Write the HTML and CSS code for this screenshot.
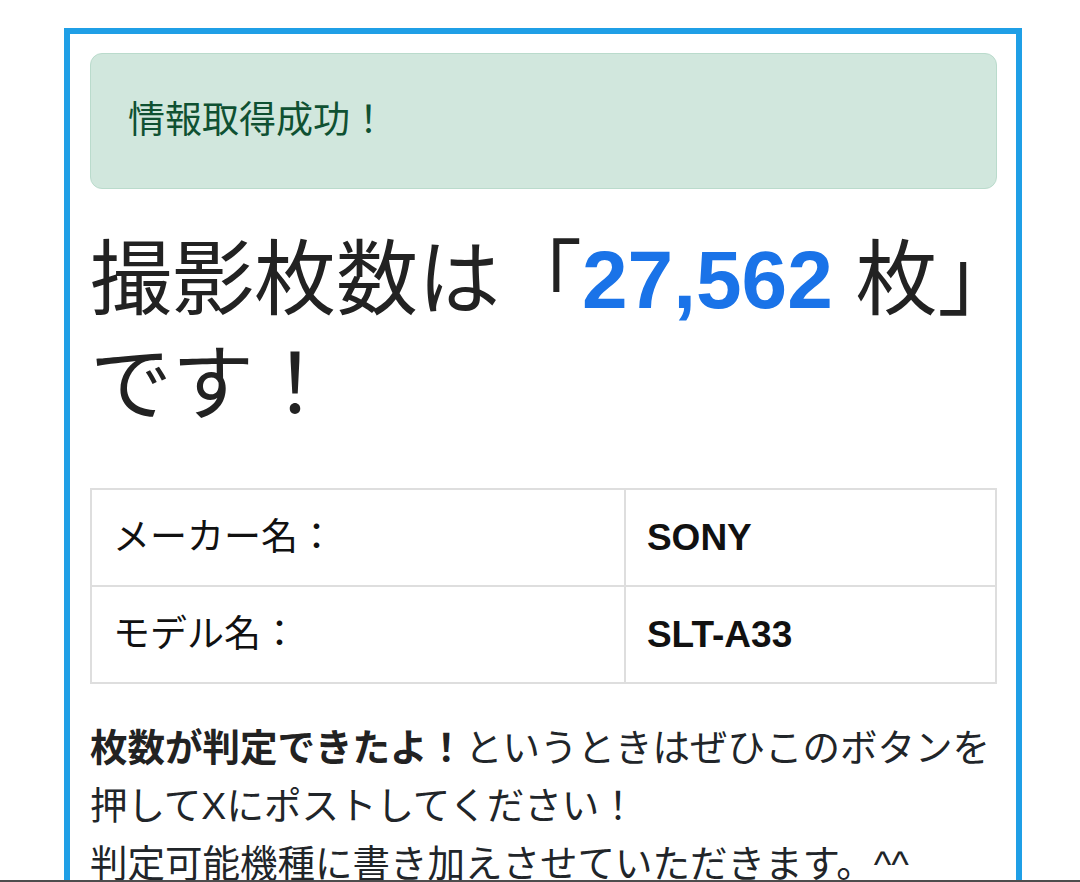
FILE: index.html
```html
<!DOCTYPE html>
<html lang="ja">
<head>
    <meta charset="UTF-8">
    <meta name="viewport" content="width=device-width, initial-scale=1.0">
    <title>撮影枚数チェッカー</title>
    <link rel="stylesheet" href="styles.css">
</head>
<body>

<div class="container">
    <div class="alert">情報取得成功！</div>

    <h1 class="count-title"><span class="keep">撮影枚数は「<span class="count">27,562</span> 枚」</span>です！</h1>

    <table class="info-table">
        <tr>
            <th>メーカー名：</th>
            <td>SONY</td>
        </tr>
        <tr>
            <th>モデル名：</th>
            <td>SLT-A33</td>
        </tr>
    </table>

    <p class="note">
        <strong>枚数が判定できたよ！</strong>というときはぜひこのボタンを押してXにポストしてください！<br>
        判定可能機種に書き加えさせていただきます。^^
    </p>
</div>

<div class="screen-edge"></div>

</body>
</html>
```

FILE: styles.css
```css
body {
    font-family: "Liberation Sans", "Noto Sans CJK JP", sans-serif;
    background-color: #fff;
    color: #212529;
    margin: 0;
    padding: 28px 0 0 64px;
}
.container {
    box-sizing: border-box;
    width: 958px;
    border: 6px solid #1f9fe6;
    padding: 19px 19px 0 20px;
    min-height: 900px;
}
.alert {
    background-color: #d1e7dd;
    border: 1px solid #badbcc;
    border-radius: 12px;
    color: #0f5132;
    font-size: 37px;
    line-height: 56px;
    padding: 39px 37px;
}
.count-title {
    font-size: 82px;
    font-weight: normal;
    line-height: 105px;
    margin: 38px 0 51px;
    color: #222;
}
.keep {
    white-space: nowrap;
}
.count {
    color: #1a73e8;
    font-weight: bold;
}
.info-table {
    width: 100%;
    border-collapse: collapse;
    font-size: 37px;
    line-height: 55px;
    color: #111;
}
.info-table th, .info-table td {
    border: 2px solid #dedede;
    padding: 20px 21px;
    text-align: left;
}
.info-table th {
    width: 59%;
    font-weight: normal;
}
.info-table td {
    font-weight: bold;
}
.note {
    font-size: 37.5px;
    line-height: 58px;
    margin: 35px 0 0;
}
.note strong {
    color: #222;
}
.screen-edge {
    position: fixed;
    left: 0;
    right: 0;
    bottom: 0;
    height: 2px;
    background-color: #4d4d4d;
}
```
